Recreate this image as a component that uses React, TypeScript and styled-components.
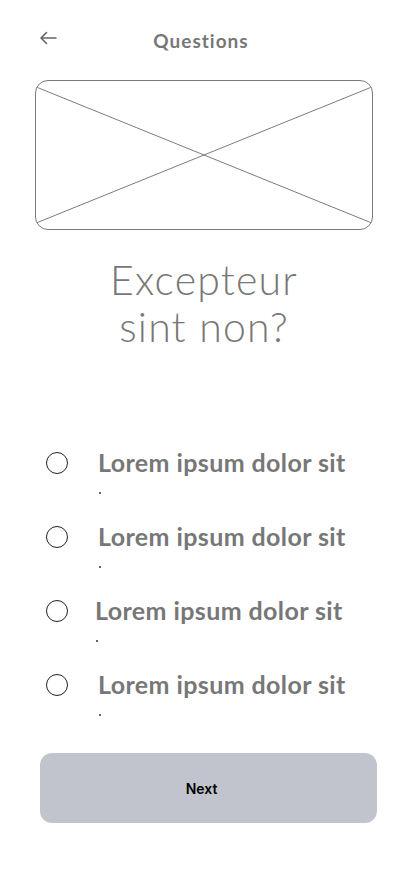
import React from "react";
import styled, { createGlobalStyle } from "styled-components";

const Global = createGlobalStyle`
  html, body { margin: 0; padding: 0; background: #ffffff; }
  body { font-family: "Lato", "Open Sans", sans-serif; }
  * { box-sizing: border-box; }
`;

const Page = styled.div`
  width: 412px;
  min-height: 870px;
  display: flex;
  flex-direction: column;
  background: #fff;
`;

const Header = styled.header`
  display: flex;
  align-items: center;
  padding: 26px 68px 0 38px;
  height: 54px;
`;

const BackButton = styled.button`
  width: 20px;
  height: 20px;
  padding: 0;
  border: none;
  background: none;
  display: flex;
  align-items: center;
  justify-content: center;
  color: #666;
  margin-top: -4px;
`;

const HeaderTitle = styled.h1`
  flex: 1;
  margin: 0;
  text-align: center;
  font-family: "Lato", sans-serif;
  font-weight: 700;
  font-size: 19px;
  letter-spacing: 1px;
  color: #777;
`;

const Placeholder = styled.div`
  margin: 26px 39px 0 35px;
  height: 150px;
  border: 1px solid #7a7a7a;
  border-radius: 13px;
  position: relative;
  overflow: hidden;
`;

const Cross = styled.svg`
  position: absolute;
  inset: 0;
  width: 100%;
  height: 100%;
`;

const Question = styled.h2`
  margin: 26px 0 0;
  padding-right: 4px;
  text-align: center;
  font-family: "Lato", sans-serif;
  font-weight: 300;
  font-size: 41px;
  line-height: 47px;
  letter-spacing: 1.2px;
  color: #777;
`;

const Options = styled.div`
  margin-top: 95px;
  display: flex;
  flex-direction: column;
`;

const Option = styled.label<{ $shift?: number }>`
  display: grid;
  grid-template-columns: 22px 1fr;
  column-gap: ${(p) => 30 - (p.$shift ?? 0)}px;
  padding-left: 46px;
  height: 74px;
  cursor: pointer;
`;

const Radio = styled.span`
  width: 22px;
  height: 22px;
  border-radius: 50%;
  border: 1px solid #222;
  margin-top: 7px;
`;

const OptionText = styled.div`
  display: flex;
  flex-direction: column;
`;

const OptionLabel = styled.span`
  font-family: "Lato", sans-serif;
  font-weight: 700;
  font-size: 25px;
  line-height: 34px;
  color: #777;
  letter-spacing: 0.4px;
`;

const Dot = styled.span`
  width: 2px;
  height: 2px;
  margin: 13px 0 0 1px;
  background: #666;
`;

const NextButton = styled.button`
  margin: 12px 35px 0 40px;
  padding: 0 14px 0 0;
  height: 70px;
  border: none;
  border-radius: 12px;
  background: #c1c4cc;
  font-family: "Inter", sans-serif;
  font-weight: 600;
  font-size: 14px;
  color: #000;
`;

const options = [0, 0, 3, 0];

export default function App() {
  return (
    <Page>
      <Global />
      <Header>
        <BackButton aria-label="Back">
          <svg width="18" height="14" viewBox="0 0 18 14" fill="none">
            <path d="M17 7H2M7.5 1.5L2 7l5.5 5.5" stroke="#666" strokeWidth="1.6" strokeLinecap="round" strokeLinejoin="round" />
          </svg>
        </BackButton>
        <HeaderTitle>Questions</HeaderTitle>
      </Header>
      <Placeholder>
        <Cross viewBox="0 0 338 150" preserveAspectRatio="none">
          <line x1="0" y1="6" x2="338" y2="144" stroke="#7a7a7a" strokeWidth="1" />
          <line x1="0" y1="144" x2="338" y2="6" stroke="#7a7a7a" strokeWidth="1" />
        </Cross>
      </Placeholder>
      <Question>
        Excepteur
        <br />
        sint non?
      </Question>
      <Options>
        {options.map((s, i) => (
          <Option key={i} $shift={s}>
            <Radio />
            <OptionText>
              <OptionLabel>Lorem ipsum dolor sit</OptionLabel>
              <Dot />
            </OptionText>
          </Option>
        ))}
      </Options>
      <NextButton>Next</NextButton>
    </Page>
  );
}
